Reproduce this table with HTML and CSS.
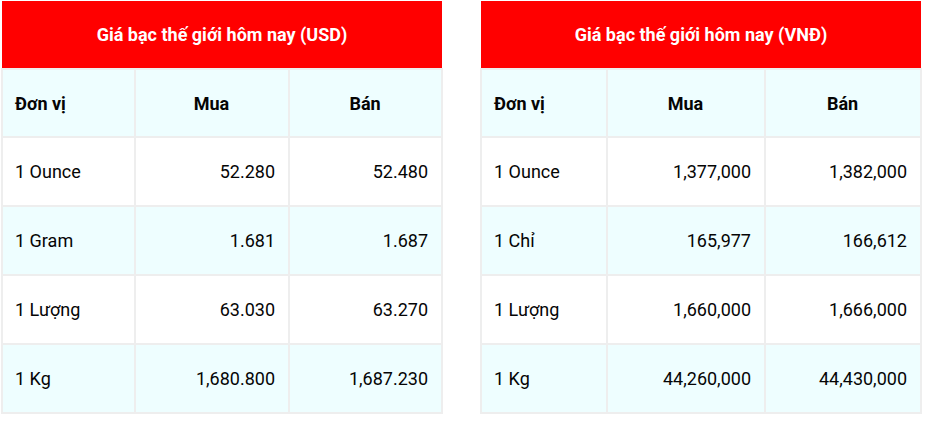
FILE: index.html
```html
<!DOCTYPE html>
<html lang="vi">
<head>
<meta charset="utf-8">
<link rel="stylesheet" href="styles.css">
</head>
<body>
<div class="wrap">
  <table class="price usd">
    <colgroup><col class="k1"><col class="k2"><col class="k3"></colgroup>
    <thead>
      <tr><th colspan="3" class="title">Giá bạc thế giới hôm nay (USD)</th></tr>
    </thead>
    <tbody>
      <tr class="alt head"><td>Đơn vị</td><td class="center">Mua</td><td class="center">Bán</td></tr>
      <tr><td>1 Ounce</td><td class="num">52.280</td><td class="num">52.480</td></tr>
      <tr class="alt"><td>1 Gram</td><td class="num">1.681</td><td class="num">1.687</td></tr>
      <tr><td>1 Lượng</td><td class="num">63.030</td><td class="num">63.270</td></tr>
      <tr class="alt"><td>1 Kg</td><td class="num">1,680.800</td><td class="num">1,687.230</td></tr>
    </tbody>
  </table>
  <table class="price vnd">
    <colgroup><col class="k1"><col class="k2"><col class="k3"></colgroup>
    <thead>
      <tr><th colspan="3" class="title">Giá bạc thế giới hôm nay (VNĐ)</th></tr>
    </thead>
    <tbody>
      <tr class="alt head"><td>Đơn vị</td><td class="center">Mua</td><td class="center">Bán</td></tr>
      <tr><td>1 Ounce</td><td class="num">1,377,000</td><td class="num">1,382,000</td></tr>
      <tr class="alt"><td>1 Chỉ</td><td class="num">165,977</td><td class="num">166,612</td></tr>
      <tr><td>1 Lượng</td><td class="num">1,660,000</td><td class="num">1,666,000</td></tr>
      <tr class="alt"><td>1 Kg</td><td class="num">44,260,000</td><td class="num">44,430,000</td></tr>
    </tbody>
  </table>
</div>
</body>
</html>
```

FILE: styles.css
```css
html, body {
  margin: 0;
  padding: 0;
  background: #ffffff;
}
body {
  font-family: Roboto, "Liberation Sans", Arial, sans-serif;
  color: #050505;
}
.wrap {
  display: flex;
  gap: 37px;
  padding: 1px 0 0 1px;
  align-items: flex-start;
}
.price {
  width: 442px;
  border-collapse: collapse;
  table-layout: fixed;
  font-size: 18px;
}
.price .title {
  background: #ff0000;
  color: #ffffff;
  font-weight: 700;
  font-size: 18px;
  height: 67px;
  padding: 0;
  text-align: center;
  border: none;
  border-bottom: 1px solid #eeeeee;
}
.price td {
  border: 2px solid #eeeeee;
  height: 67px;
  padding: 0 13px 0 12px;
  vertical-align: middle;
}
.price tr.alt td {
  background: #eefeff;
}
.price tr.head td {
  font-weight: 700;
  height: 66px;
}
.price .center {
  text-align: center;
}
.price .num {
  text-align: right;
}
.usd .k1 { width: 133px; }
.usd .k2 { width: 154px; }
.vnd .k1 { width: 126px; }
.vnd .k2 { width: 158px; }
```
